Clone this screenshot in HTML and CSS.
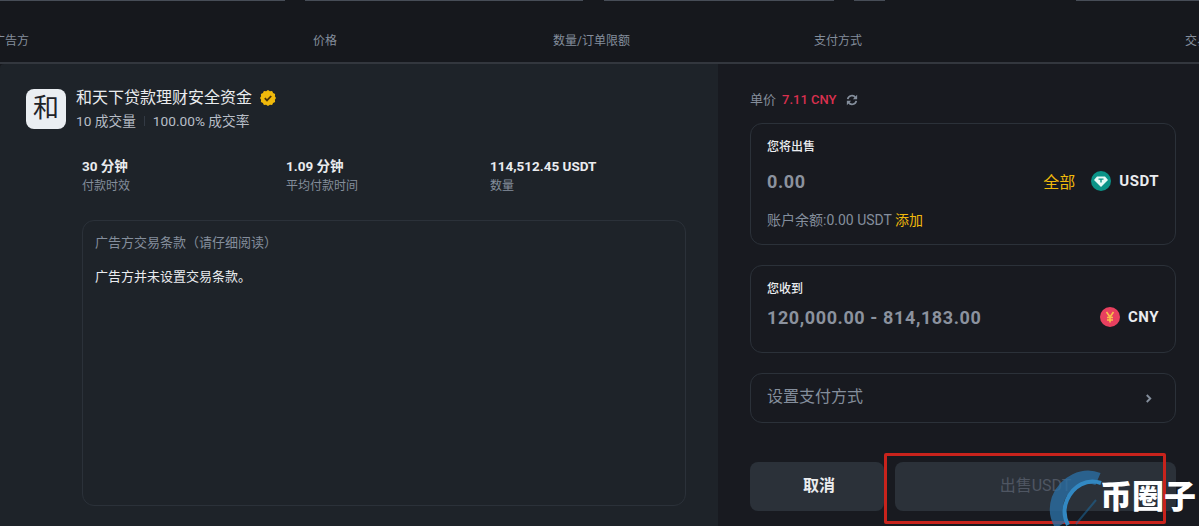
FILE: index.html
```html
<!DOCTYPE html>
<html lang="zh-CN">
<head>
    <meta charset="UTF-8">
    <meta name="viewport" content="width=device-width, initial-scale=1.0">
    <title>出售USDT</title>
    <link rel="stylesheet" href="styles.css">
</head>
<body>
    <!-- Filter inputs cut off at the top -->
    <div class="top-strip">
        <span class="seg seg-a"></span>
        <span class="seg seg-b"></span>
        <span class="seg seg-c"></span>
        <span class="seg seg-d"></span>
        <span class="seg seg-e"></span>
    </div>

    <!-- Table head -->
    <div class="table-head">
        <span class="col col-adv">广告方</span>
        <span class="col col-price">价格</span>
        <span class="col col-limit">数量/订单限额</span>
        <span class="col col-pay">支付方式</span>
        <span class="col col-trade">交易</span>
    </div>

    <main class="panel">
        <!-- Advertiser Section -->
        <section class="left">
            <div class="adv">
                <div class="avatar">和</div>
                <div class="adv-info">
                    <div class="adv-name">
                        和天下贷款理财安全资金
                        <svg class="badge" width="16" height="16" viewBox="0 0 16 16">
                            <path fill="#f0b90b" d="M8 0l1.9 1.2 2.2-.2 1 2 2 1-.2 2.2L16 8l-1.1 1.8.2 2.2-2 1-1 2-2.2-.2L8 16l-1.9-1.2-2.2.2-1-2-2-1 .2-2.2L0 8l1.1-1.8L.9 4l2-1 1-2 2.2.2z"/>
                            <path fill="none" stroke="#4a3208" stroke-width="1.8" d="M4.8 8.2l2.2 2.2 4.2-4.4"/>
                        </svg>
                    </div>
                    <div class="adv-sub">
                        <span>10 成交量</span>
                        <i class="sep"></i>
                        <span>100.00% 成交率</span>
                    </div>
                </div>
            </div>

            <div class="stats">
                <div class="stat">
                    <div class="stat-value">30 分钟</div>
                    <div class="stat-label">付款时效</div>
                </div>
                <div class="stat">
                    <div class="stat-value">1.09 分钟</div>
                    <div class="stat-label">平均付款时间</div>
                </div>
                <div class="stat">
                    <div class="stat-value">114,512.45 USDT</div>
                    <div class="stat-label">数量</div>
                </div>
            </div>

            <div class="terms">
                <div class="terms-title">广告方交易条款（请仔细阅读）</div>
                <div class="terms-text">广告方并未设置交易条款。</div>
            </div>
        </section>

        <!-- Order Form Section -->
        <section class="right">
            <div class="unit-price">
                单价 <span class="price-red">7.11 CNY</span>
                <svg class="refresh" width="12" height="12" viewBox="0 0 14 14" fill="none" stroke="#848e9c" stroke-width="2">
                    <path d="M2 6a5 5 0 0 1 9-2"/>
                    <path d="M12 8a5 5 0 0 1-9 2"/>
                    <path fill="#848e9c" stroke="none" d="M13 1v5H8zM1 13V8h5z"/>
                </svg>
            </div>

            <div class="card card-sell">
                <div class="card-title">您将出售</div>
                <div class="amount-row">
                    <span class="amount">0.00</span>
                    <span class="all">全部</span>
                    <svg class="coin" width="20" height="20" viewBox="0 0 20 20">
                        <circle cx="10" cy="10" r="10" fill="#0b9488"/>
                        <path fill="#e6fbf7" d="M6 5.5h8l3 3.5-7 7-7-7z"/>
                        <path fill="#0b9488" d="M7.5 7.5h5v1.2h-1.8v2.8H9.3V8.7H7.5z"/>
                    </svg>
                    <span class="currency">USDT</span>
                </div>
                <div class="balance">账户余额:0.00 USDT <a class="add">添加</a></div>
            </div>

            <div class="card card-get">
                <div class="card-title">您收到</div>
                <div class="amount-row">
                    <span class="amount">120,000.00 - 814,183.00</span>
                    <svg class="coin coin-cny" width="20" height="20" viewBox="0 0 20 20">
                        <circle cx="10" cy="10" r="10" fill="#e8405f"/>
                        <path fill="none" stroke="#f6c34a" stroke-width="1.6" d="M6.5 5l3.5 5 3.5-5M10 10v5.5M7 10.5h6M7 13h6"/>
                    </svg>
                    <span class="currency">CNY</span>
                </div>
            </div>

            <div class="pay-select">
                <span class="pay-label">设置支付方式</span>
                <svg width="7" height="9" viewBox="0 0 8 10" fill="none" stroke="#848e9c" stroke-width="2.2">
                    <path d="M2 1l4 4-4 4"/>
                </svg>
            </div>

            <div class="actions">
                <button class="btn btn-cancel">取消</button>
                <button class="btn btn-sell">出售USDT</button>
            </div>
        </section>
    </main>

    <!-- Annotation and watermark pasted on top of the screenshot -->
    <div class="red-box"></div>
    <div class="watermark">
        <svg class="wm-logo" width="56" height="56" viewBox="0 0 56 56" fill="none">
            <path stroke="#2b6ea3" stroke-opacity=".8" stroke-width="13" d="M50 9C36 3 17 11 10 29c-3 9-2 18 3 26"/>
            <path stroke="#3288c2" stroke-width="4" d="M53 13C39 8 25 16 19 30c-4 9-3 17 1 25"/>
            <path stroke="#1c6fa8" stroke-opacity=".5" stroke-width="2" d="M48 30L28 54"/>
        </svg>
        <span class="wm-text">币圈子</span>
    </div>
</body>
</html>
```

FILE: styles.css
```css
/* Global Styles */
* {
    margin: 0;
    padding: 0;
    box-sizing: border-box;
}

html, body {
    height: 100%;
    overflow: hidden;
}

body {
    position: relative;
    font-family: 'Roboto', 'Noto Sans CJK SC', sans-serif;
    background-color: #16181d;
    color: #eaecef;
}

/* Top strip */
.top-strip {
    display: flex;
    height: 2px;
    background-color: #16181d;
}

.seg {
    display: block;
    height: 1px;
    background-color: #474d57;
}

.seg-a { width: 285px; }
.seg-b { width: 278px; margin-left: 20px; }
.seg-c { width: 230px; margin-left: 21px; }
.seg-d { width: 31px; margin-left: 20px; }
.seg-e { flex: 1; margin-left: 191px; }

/* Table head */
.table-head {
    height: 62px;
    border-bottom: 2px solid #33373e;
    display: flex;
    align-items: center;
    font-size: 12px;
    color: #848e9c;
    padding-top: 15px;
}

.col {
    flex: none;
    white-space: nowrap;
}

.col-adv { width: 313px; margin-left: -7px; }
.col-price { width: 240px; margin-left: 7px; }
.col-limit { width: 261px; }
.col-pay { width: 371px; }
.col-trade { width: 30px; }

/* Panel */
.panel {
    display: flex;
    height: 462px;
}

.left {
    width: 718px;
    flex: none;
    background-color: #1e2329;
    border-top-left-radius: 4px;
    padding: 25px 32px 0 26px;
}

.adv {
    display: flex;
    gap: 10px;
}

.avatar {
    width: 40px;
    height: 40px;
    border-radius: 8px;
    background-color: #eaeef2;
    color: #1e2329;
    font-size: 26px;
    line-height: 38px;
    text-align: center;
}

.adv-name {
    display: flex;
    align-items: center;
    gap: 8px;
    font-size: 16px;
    line-height: 20px;
    margin-top: -1px;
}

.adv-sub {
    display: flex;
    align-items: center;
    margin-top: 3px;
    font-size: 13.7px;
    line-height: 20px;
    color: #b7bdc6;
}

.sep {
    width: 1px;
    height: 10px;
    background-color: #333a44;
    margin: 0 8px;
}

.stats {
    display: flex;
    margin: 26px 0 0 56px;
}

.stat {
    flex: none;
    width: 204px;
}

.stat-value {
    font-size: 13.5px;
    font-weight: 700;
    line-height: 18px;
}

.stat-label {
    font-size: 12px;
    line-height: 16px;
    margin-top: 3px;
    color: #848e9c;
}

.terms {
    width: 604px;
    height: 286px;
    margin: 26px 0 0 56px;
    padding: 13px 12px;
    border: 1px solid #2b3139;
    border-radius: 12px;
}

.terms-title {
    font-size: 13px;
    line-height: 18px;
    color: #848e9c;
}

.terms-text {
    font-size: 13px;
    line-height: 18px;
    margin-top: 16px;
}

/* Order form */
.right {
    flex: 1;
    background-color: #181a20;
    padding: 26px 23px 0 32px;
    display: flex;
    flex-direction: column;
}

.unit-price {
    display: flex;
    align-items: center;
    gap: 6px;
    font-size: 13px;
    line-height: 20px;
    color: #848e9c;
}

.price-red {
    color: #d9304e;
    font-weight: 500;
}

.refresh {
    margin-left: 3px;
}

.card {
    border: 1px solid #2b3139;
    border-radius: 12px;
    padding: 13px 16px;
}

.card-sell {
    height: 122px;
    margin-top: 13px;
}

.card-get {
    height: 88px;
    margin-top: 20px;
}

.card-title {
    font-size: 12px;
    line-height: 20px;
    font-weight: 500;
}

.amount-row {
    display: flex;
    align-items: center;
    height: 30px;
    margin-top: 9px;
}

.card-get .amount-row {
    margin-top: 3px;
}

.amount {
    flex: 1;
    font-size: 18px;
    font-weight: 700;
    letter-spacing: .6px;
    color: #8b929e;
}

.all {
    font-size: 16px;
    color: #f0b90b;
    margin-right: 16px;
}

.coin {
    margin-right: 8px;
}

.currency {
    font-size: 15px;
    font-weight: 700;
    letter-spacing: .5px;
}

.balance {
    margin-top: 15px;
    font-size: 14px;
    line-height: 18px;
    color: #848e9c;
}

.add {
    color: #f0b90b;
}

.pay-select {
    display: flex;
    align-items: center;
    justify-content: space-between;
    height: 50px;
    margin-top: 20px;
    padding: 0 23px 0 16px;
    border: 1px solid #2b3139;
    border-radius: 12px;
    color: #848e9c;
}

.pay-label {
    font-size: 16px;
    padding-bottom: 6px;
}

.actions {
    display: flex;
    gap: 11px;
    margin-top: 39px;
}

.btn {
    height: 49px;
    padding-bottom: 6px;
    border: none;
    border-radius: 8px;
    background-color: #2b3139;
    font-family: inherit;
    font-size: 16px;
}

.btn-cancel {
    width: 134px;
    padding-left: 4px;
    color: #eaecef;
    font-weight: 700;
}

.btn-sell {
    flex: 1;
    color: #4f5662;
}

/* Annotation overlays */
.red-box {
    position: absolute;
    left: 884px;
    top: 453px;
    width: 282px;
    height: 71px;
    border: 3px solid #c8231c;
    border-radius: 2px;
}

.watermark {
    position: absolute;
    left: 1048px;
    top: 470px;
    display: flex;
    align-items: flex-start;
}

.wm-logo {
    flex: none;
}

.wm-text {
    margin: 10px 0 0 -4px;
    font-size: 32px;
    line-height: 34px;
    font-weight: 900;
    color: #fff;
    white-space: nowrap;
}
```
